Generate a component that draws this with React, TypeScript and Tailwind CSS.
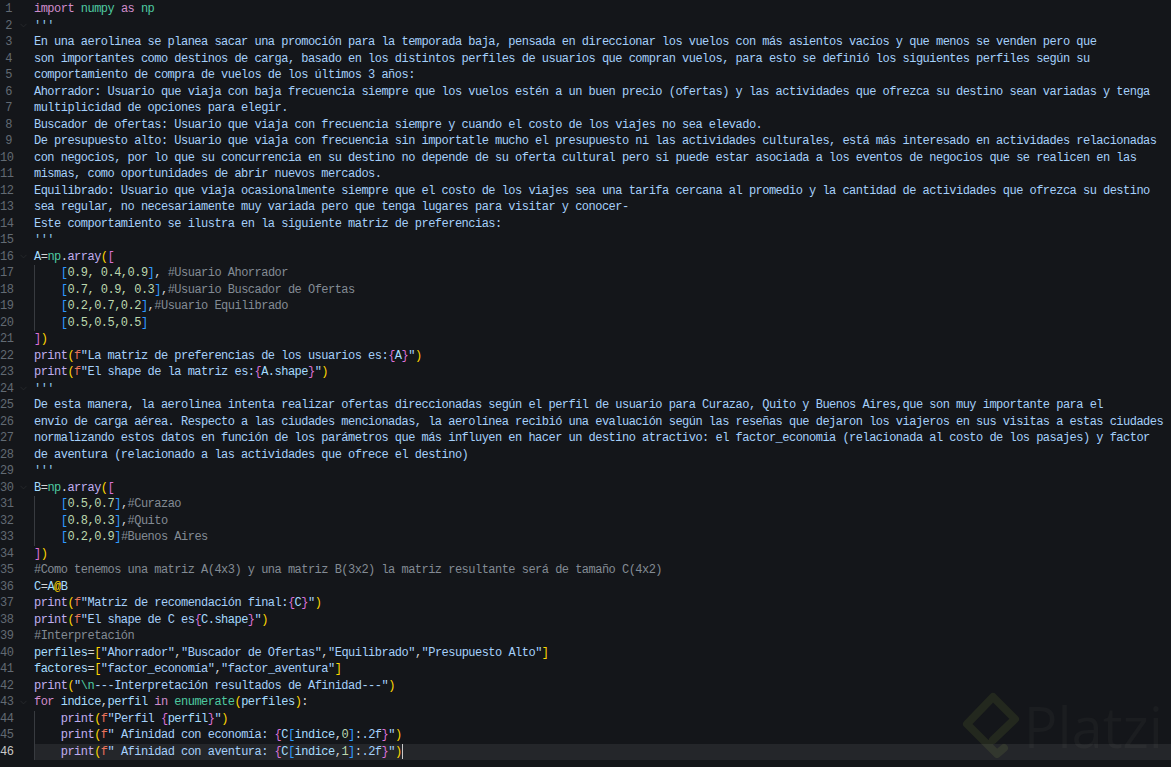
import { ChevronDown } from "lucide-react";

const K = "text-[#d08ccb]";
const T = "text-[#4ec9a0]";
const S = "text-[#a5d0fb]";
const P = "text-[#c0aef0]";
const Y = "text-[#ffd700]";
const M = "text-[#da70d6]";
const B = "text-[#2f9bff]";
const V = "text-[#a5dcfe]";
const N = "text-[#bcd8ae]";
const C = "text-[#838b94]";
const F = "text-[#e8735a]";
const W = "text-[#d4d4d4]";
const Q = "text-[#8fc7e8]";

type Seg = [string, string];
const doc = (s: string): Seg[] => [[S, s]];
const quotes: Seg[] = [[Q, "'''"]];
const row = (a: string, c: string, note: string): Seg[] => [
  [W, "    "],
  [B, "["],
  [N, a],
  [B, "]"],
  [W, c],
  [C, note],
];
const pr = (body: Seg[]): Seg[] => [[P, "print"], [Y, "("], [F, "f"], ...body, [Y, ")"]];

const lines: Seg[][] = [
  [[K, "import "], [T, "numpy "], [K, "as "], [T, "np"]],
  quotes,
  doc("En una aerolinea se planea sacar una promoción para la temporada baja, pensada en direccionar los vuelos con más asientos vacíos y que menos se venden pero que"),
  doc("son importantes como destinos de carga, basado en los distintos perfiles de usuarios que compran vuelos, para esto se definió los siguientes perfiles según su"),
  doc("comportamiento de compra de vuelos de los últimos 3 años:"),
  doc("Ahorrador: Usuario que viaja con baja frecuencia siempre que los vuelos estén a un buen precio (ofertas) y las actividades que ofrezca su destino sean variadas y tenga"),
  doc("multiplicidad de opciones para elegir."),
  doc("Buscador de ofertas: Usuario que viaja con frecuencia siempre y cuando el costo de los viajes no sea elevado."),
  doc("De presupuesto alto: Usuario que viaja con frecuencia sin importatle mucho el presupuesto ni las actividades culturales, está más interesado en actividades relacionadas"),
  doc("con negocios, por lo que su concurrencia en su destino no depende de su oferta cultural pero si puede estar asociada a los eventos de negocios que se realicen en las"),
  doc("mismas, como oportunidades de abrir nuevos mercados."),
  doc("Equilibrado: Usuario que viaja ocasionalmente siempre que el costo de los viajes sea una tarifa cercana al promedio y la cantidad de actividades que ofrezca su destino"),
  doc("sea regular, no necesariamente muy variada pero que tenga lugares para visitar y conocer-"),
  doc("Este comportamiento se ilustra en la siguiente matriz de preferencias:"),
  quotes,
  [[V, "A"], [W, "="], [T, "np"], [W, "."], [P, "array"], [Y, "("], [M, "["]],
  row("0.9, 0.4,0.9", ", ", "#Usuario Ahorrador"),
  row("0.7, 0.9, 0.3", ",", "#Usuario Buscador de Ofertas"),
  row("0.2,0.7,0.2", ",", "#Usuario Equilibrado"),
  row("0.5,0.5,0.5", "", ""),
  [[M, "]"], [Y, ")"]],
  pr([[S, "\"La matriz de preferencias de los usuarios es:"], [M, "{"], [V, "A"], [M, "}"], [S, "\""]]),
  pr([[S, "\"El shape de la matriz es:"], [M, "{"], [V, "A.shape"], [M, "}"], [S, "\""]]),
  quotes,
  doc("De esta manera, la aerolinea intenta realizar ofertas direccionadas según el perfil de usuario para Curazao, Quito y Buenos Aires,que son muy importante para el"),
  doc("envío de carga aérea. Respecto a las ciudades mencionadas, la aerolínea recibió una evaluación según las reseñas que dejaron los viajeros en sus visitas a estas ciudades"),
  doc("normalizando estos datos en función de los parámetros que más influyen en hacer un destino atractivo: el factor_economia (relacionada al costo de los pasajes) y factor"),
  doc("de aventura (relacionado a las actividades que ofrece el destino)"),
  quotes,
  [[V, "B"], [W, "="], [T, "np"], [W, "."], [P, "array"], [Y, "("], [M, "["]],
  row("0.5,0.7", ",", "#Curazao"),
  row("0.8,0.3", ",", "#Quito"),
  row("0.2,0.9", "", "#Buenos Aires"),
  [[M, "]"], [Y, ")"]],
  [[C, "#Como tenemos una matriz A(4x3) y una matriz B(3x2) la matriz resultante será de tamaño C(4x2)"]],
  [[V, "C"], [W, "="], [V, "A"], [Y, "@"], [V, "B"]],
  pr([[S, "\"Matriz de recomendación final:"], [M, "{"], [V, "C"], [M, "}"], [S, "\""]]),
  pr([[S, "\"El shape de C es"], [M, "{"], [V, "C.shape"], [M, "}"], [S, "\""]]),
  [[C, "#Interpretación"]],
  [[V, "perfiles"], [W, "="], [Y, "["], [S, "\"Ahorrador\""], [W, ","], [S, "\"Buscador de Ofertas\""], [W, ","], [S, "\"Equilibrado\""], [W, ","], [S, "\"Presupuesto Alto\""], [Y, "]"]],
  [[V, "factores"], [W, "="], [Y, "["], [S, "\"factor_economía\""], [W, ","], [S, "\"factor_aventura\""], [Y, "]"]],
  [[P, "print"], [Y, "("], [S, "\""], [T, "\\n"], [S, "---Interpretación resultados de Afinidad---\""], [Y, ")"]],
  [[K, "for "], [V, "indice"], [W, ","], [V, "perfil "], [K, "in "], [T, "enumerate"], [Y, "("], [V, "perfiles"], [Y, ")"], [W, ":"]],
  [[W, "    "], ...pr([[S, "\"Perfil "], [M, "{"], [V, "perfil"], [M, "}"], [S, "\""]])],
  [[W, "    "], ...pr([[S, "\" Afinidad con economía: "], [M, "{"], [V, "C"], [B, "["], [V, "indice"], [W, ","], [N, "0"], [B, "]"], [W, ":"], [S, ".2f"], [M, "}"], [S, "\""]])],
  [[W, "    "], ...pr([[S, "\" Afinidad con aventura: "], [M, "{"], [V, "C"], [B, "["], [V, "indice"], [W, ","], [N, "1"], [B, "]"], [W, ":"], [S, ".2f"], [M, "}"], [S, "\""]])],
];

const folds = new Set([2, 16, 24, 30, 43]);
const guided = new Set([17, 18, 19, 20, 31, 32, 33, 44, 45, 46]);

export default function App() {
  return (
    <div className="relative h-[767px] w-[1171px] overflow-hidden bg-[#14161a] font-['Liberation_Mono',monospace] text-[12px] tracking-[-0.52px]">
      <div className="absolute right-[8px] bottom-[6px] flex items-center gap-[3px]">
        <svg width="62" height="70" viewBox="960 692 62 70" fill="none" stroke="#23281e" strokeWidth="8" strokeLinejoin="round" strokeLinecap="round">
          <path d="M1005 749L998 755L968 725L994 698L1016 720L994 741" />
        </svg>
        <span className="font-['Open_Sans',sans-serif] text-[56px] leading-none tracking-normal text-[#1b1d20]">Platzi</span>
      </div>
      <div className="relative flex flex-col pt-[1px]">
        {lines.map((segs, i) => {
          const n = i + 1;
          const active = n === 46;
          return (
            <div key={n} className="flex h-[16.51px] items-center whitespace-pre leading-[16.5px]">
              <div className={`w-[12px] shrink-0 text-right ${active ? "text-[#c8c8c8]" : "text-[#626a73]"}`}>{n}</div>
              <div className="flex w-[22px] shrink-0 justify-center text-[#2b2e32]">
                {folds.has(n) ? <ChevronDown size={11} strokeWidth={1.5} /> : null}
              </div>
              <div
                className={`h-full flex-1 ${active ? "bg-white/[0.07]" : ""} ${guided.has(n) ? "shadow-[inset_1px_0_0_#383b40]" : ""}`}
              >
                {segs.map(([cls, text], j) => (
                  <span key={j} className={cls}>{text}</span>
                ))}
                {active ? <span className="inline-block h-[15px] w-0 border-l border-[#c8c8c8] align-middle" /> : null}
              </div>
            </div>
          );
        })}
      </div>
    </div>
  );
}
